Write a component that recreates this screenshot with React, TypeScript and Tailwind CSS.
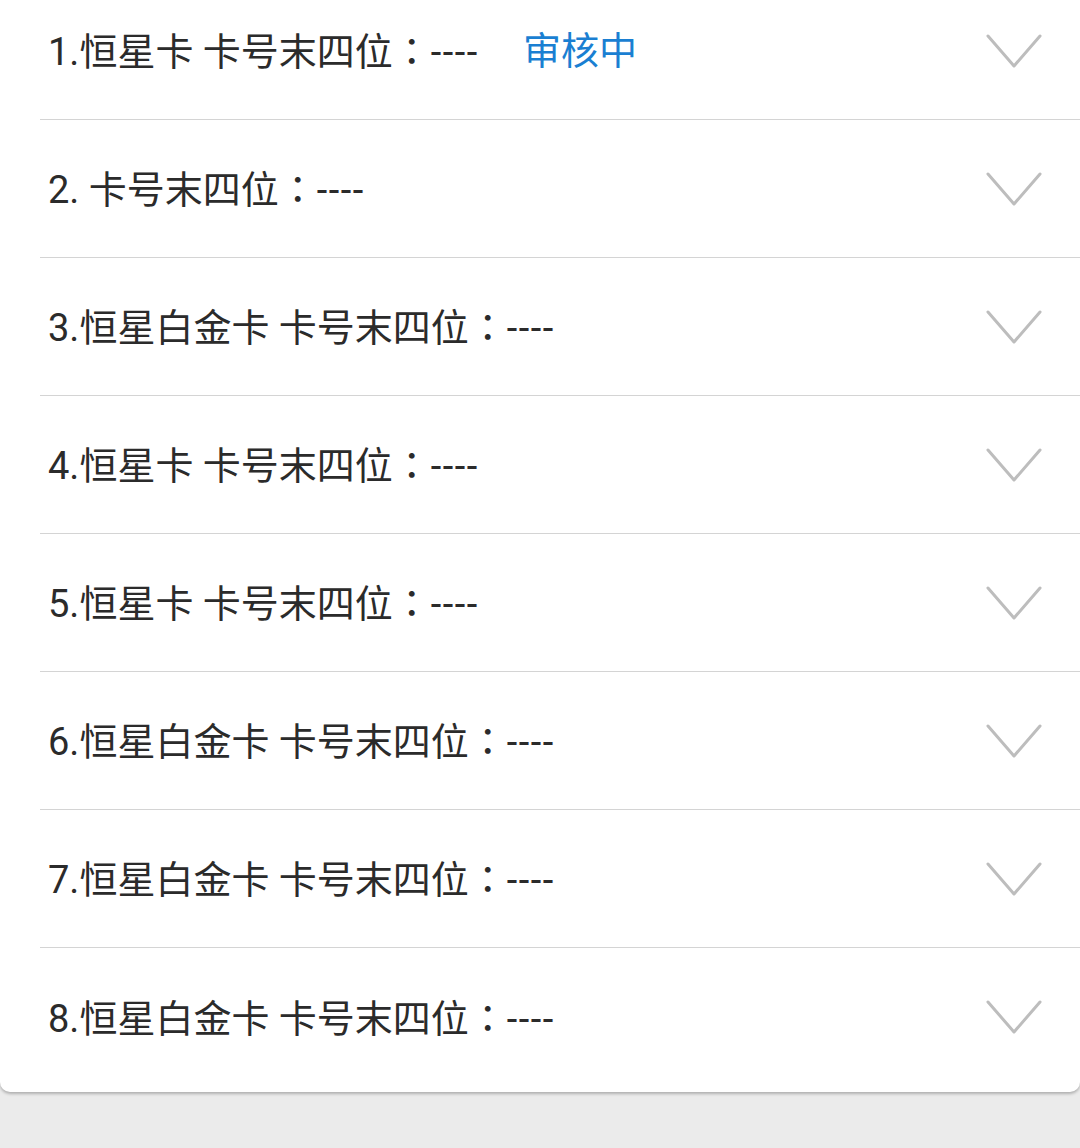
const cards = [
  { no: '1.', name: '恒星卡 ', status: '审核中' },
  { no: '2. ', name: '' },
  { no: '3.', name: '恒星白金卡 ' },
  { no: '4.', name: '恒星卡 ' },
  { no: '5.', name: '恒星卡 ' },
  { no: '6.', name: '恒星白金卡 ' },
  { no: '7.', name: '恒星白金卡 ' },
  { no: '8.', name: '恒星白金卡 ' },
]

function Chevron() {
  return (
    <svg width="56" height="36" viewBox="0 0 56 36" fill="none" className="shrink-0">
      <polyline
        points="2,3 28,33 54,3"
        stroke="#bdbdbd"
        strokeWidth="3"
        strokeLinecap="round"
        strokeLinejoin="round"
      />
    </svg>
  )
}

export default function App() {
  return (
    <div
      className="min-h-[1148px] bg-[#ebebeb] overflow-hidden"
      style={{ fontFamily: 'Roboto, "Noto Sans CJK SC", sans-serif' }}
    >
      {/* card list */}
      <div className="-mt-[18px] bg-white rounded-b-[10px] pb-[6px] shadow-[0_2px_3px_rgba(0,0,0,0.25)]">
        {cards.map((c, i) => (
          <div
            key={i}
            className={
              'ml-[40px] pl-[8px] pr-[38px] flex items-center justify-between h-[138px] ' +
              (i < cards.length - 1 ? 'border-b border-[#d4d4d4]' : '')
            }
          >
            <div className="flex items-center text-[38px] text-[#2b2b2b] leading-none whitespace-pre">
              <span>
                {c.no}
                {c.name}卡号末四位
                <span className="font-['Noto_Sans_CJK_TC',sans-serif]">：</span>
                <span className="tracking-[1.5px]">----</span>
              </span>
              {c.status && (
                <span className="ml-[44px] text-[#1a7fd2]">{c.status}</span>
              )}
            </div>
            <Chevron />
          </div>
        ))}
      </div>
    </div>
  )
}
